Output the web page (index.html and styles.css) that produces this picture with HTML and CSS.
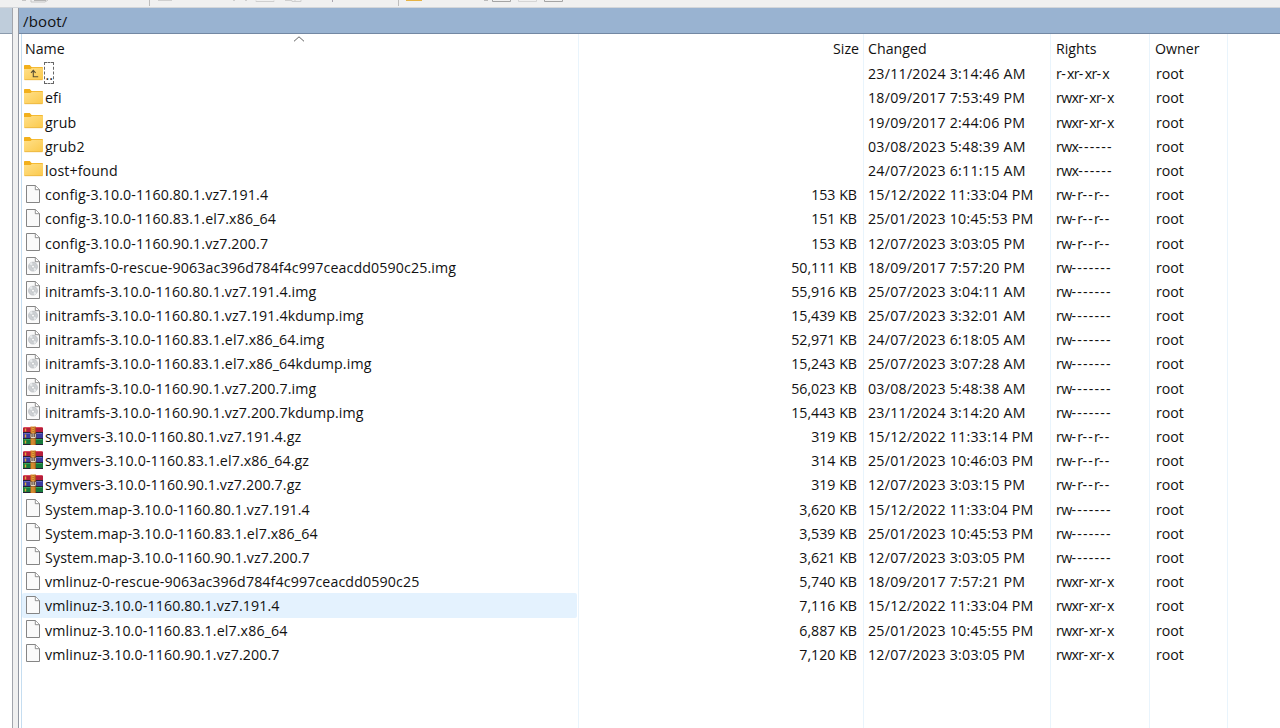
FILE: index.html
```html
<!DOCTYPE html>
<html lang="en">
  <head>
    <meta charset="UTF-8" />
    <meta name="viewport" content="width=device-width, initial-scale=1.0" />
    <title>/boot/</title>
    <link rel="stylesheet" href="styles.css">
  </head>
  <body>
    <!-- Icons shared by the file rows -->
    <svg class="sprite" aria-hidden="true">
      <defs>
        <linearGradient id="folder-fill" x1="0" y1="0" x2="1" y2="1">
          <stop offset="0" stop-color="#ffe08a" />
          <stop offset="1" stop-color="#fbc94b" />
        </linearGradient>
        <linearGradient id="strap-fill" x1="0" y1="0" x2="1" y2="0">
          <stop offset="0" stop-color="#c9701c" />
          <stop offset="0.5" stop-color="#f0a440" />
          <stop offset="1" stop-color="#a95712" />
        </linearGradient>
      </defs>
      <symbol id="folder" viewBox="0 0 20 20">
        <path d="M1 2.8q0-.8.8-.8h5l1.7 2H19q1 0 1 1v3H1z" fill="#f2b01c" />
        <path d="M1 6h6.5l1.6-1.3H19q1 0 1 1v10.3q0 1-1 1H2q-1 0-1-1z" fill="url(#folder-fill)" />
        <path d="M1.5 16.7h18" stroke="#e9b23c" stroke-width=".8" />
      </symbol>
      <symbol id="up" viewBox="0 0 20 20">
        <use href="#folder" />
        <path d="M10.3 7.5v6.3h4.9M8 9.8l2.3-2.4 2.3 2.4" fill="none" stroke="#5a5034" stroke-width="1.1" />
      </symbol>
      <symbol id="file" viewBox="0 0 20 20">
        <path d="M3.5 1.5h9l4 4v13h-13z" fill="#fafafa" stroke="#858585" />
        <path d="M12.3 1.5v4.2h4.2" fill="#fff" stroke="#858585" stroke-width=".9" />
      </symbol>
      <symbol id="disc" viewBox="0 0 20 20">
        <use href="#file" />
        <circle cx="10" cy="10.6" r="4.5" fill="#cdd0d3" stroke="#b0b4b8" stroke-width=".6" />
        <path d="M10 10.6L6.3 7.9A4.6 4.6 0 0 1 9 6.1zM10 10.6l3.7 2.7a4.6 4.6 0 0 1-2.5 1.7z" fill="#e6e9eb" />
        <circle cx="10" cy="10.6" r="1.5" fill="#fafafa" stroke="#a3a8ad" stroke-width=".5" />
      </symbol>
      <symbol id="archive" viewBox="0 0 20 20">
        <path d="M1 1h18l1 1v4.5H0V2z" fill="#b51f3c" />
        <path d="M0 6.5h20v6H0z" fill="#3b3c9e" />
        <path d="M0 12.5h20V19H0z" fill="#177a3b" />
        <path d="M0 6.5h20M0 12.5h20M0 18.5h20" stroke="#262136" stroke-width="1" />
        <path d="M1 1.5h18" stroke="#dc4a5c" />
        <path d="M1 7.5h18" stroke="#6869c5" />
        <path d="M1 13.5h18" stroke="#35a65a" />
        <path d="M2.5 2.5v3M2.5 8.5v3M2.5 14.5v3" stroke="#e5a936" stroke-width="1.4" />
        <path d="M7.5.5h5.3V19H7.5z" fill="url(#strap-fill)" />
        <path d="M10.1 1v5M10.1 13.5v5" stroke="#805018" stroke-width=".8" stroke-dasharray="1 1" />
        <path d="M7 7.5h6.4v5H7z" fill="#564035" />
        <path d="M8 8v3.5h4.3V8M10.1 7.5v4" fill="none" stroke="#f3e6d5" stroke-width=".9" />
      </symbol>
    </svg>

    <div class="toolbar">
      <svg width="1280" height="8" viewBox="0 0 1280 8">
        <path d="M22 .5h4M31 0v2h14l3-2" fill="none" stroke="#c5c5c5" />
        <path d="M34 .5h12" stroke="#b5b5b5" />
        <path d="M149.5 0v6M398.5 0v6" stroke="#bdbdbd" />
        <path d="M158 .5h14M233 .5h2M245 .5h2M256 .5v1h18v-1M285 .5h7v1h9V0M295 0v2" fill="none" stroke="#cfcfcf" />
        <path d="M332.5 0v2" stroke="#aaa6b0" />
        <path d="M406 .5h16" stroke="#e6b345" />
        <path d="M484 .5h4" stroke="#bbb" />
        <path d="M492.5 0v1.5h18V0M544.5 0v1.5h18V0" fill="none" stroke="#a5a5a5" />
        <path d="M518.5 0v1.5h18V0" fill="none" stroke="#d5d5d5" />
      </svg>
    </div>
    <div class="panels">
      <div class="left-panel"></div>
      <div class="splitter"></div>
      <div class="remote-panel">
        <div class="path">/boot/</div>
        <div class="list">
          <div class="columns">
            <span></span><span></span><span></span><span></span><span></span>
          </div>
          <div class="header row">
            <div class="name">Name</div>
            <div class="size">Size</div>
            <div class="changed">Changed</div>
            <div class="rights">Rights</div>
            <div class="owner">Owner</div>
            <svg class="sort" width="12" height="6" viewBox="0 0 12 6">
              <path d="M1 5.3l5-4.5 5 4.5" fill="none" stroke="#666" />
            </svg>
          </div>
          <div id="files"></div>
        </div>
      </div>
    </div>

    <script>
      // icon, name, size, changed, rights
      const files = [
        ["up", "..", "", "23/11/2024 3:14:46 AM", "r-xr-xr-x"],
        ["folder", "efi", "", "18/09/2017 7:53:49 PM", "rwxr-xr-x"],
        ["folder", "grub", "", "19/09/2017 2:44:06 PM", "rwxr-xr-x"],
        ["folder", "grub2", "", "03/08/2023 5:48:39 AM", "rwx------"],
        ["folder", "lost+found", "", "24/07/2023 6:11:15 AM", "rwx------"],
        ["file", "config-3.10.0-1160.80.1.vz7.191.4", "153 KB", "15/12/2022 11:33:04 PM", "rw-r--r--"],
        ["file", "config-3.10.0-1160.83.1.el7.x86_64", "151 KB", "25/01/2023 10:45:53 PM", "rw-r--r--"],
        ["file", "config-3.10.0-1160.90.1.vz7.200.7", "153 KB", "12/07/2023 3:03:05 PM", "rw-r--r--"],
        ["disc", "initramfs-0-rescue-9063ac396d784f4c997ceacdd0590c25.img", "50,111 KB", "18/09/2017 7:57:20 PM", "rw-------"],
        ["disc", "initramfs-3.10.0-1160.80.1.vz7.191.4.img", "55,916 KB", "25/07/2023 3:04:11 AM", "rw-------"],
        ["disc", "initramfs-3.10.0-1160.80.1.vz7.191.4kdump.img", "15,439 KB", "25/07/2023 3:32:01 AM", "rw-------"],
        ["disc", "initramfs-3.10.0-1160.83.1.el7.x86_64.img", "52,971 KB", "24/07/2023 6:18:05 AM", "rw-------"],
        ["disc", "initramfs-3.10.0-1160.83.1.el7.x86_64kdump.img", "15,243 KB", "25/07/2023 3:07:28 AM", "rw-------"],
        ["disc", "initramfs-3.10.0-1160.90.1.vz7.200.7.img", "56,023 KB", "03/08/2023 5:48:38 AM", "rw-------"],
        ["disc", "initramfs-3.10.0-1160.90.1.vz7.200.7kdump.img", "15,443 KB", "23/11/2024 3:14:20 AM", "rw-------"],
        ["archive", "symvers-3.10.0-1160.80.1.vz7.191.4.gz", "319 KB", "15/12/2022 11:33:14 PM", "rw-r--r--"],
        ["archive", "symvers-3.10.0-1160.83.1.el7.x86_64.gz", "314 KB", "25/01/2023 10:46:03 PM", "rw-r--r--"],
        ["archive", "symvers-3.10.0-1160.90.1.vz7.200.7.gz", "319 KB", "12/07/2023 3:03:15 PM", "rw-r--r--"],
        ["file", "System.map-3.10.0-1160.80.1.vz7.191.4", "3,620 KB", "15/12/2022 11:33:04 PM", "rw-------"],
        ["file", "System.map-3.10.0-1160.83.1.el7.x86_64", "3,539 KB", "25/01/2023 10:45:53 PM", "rw-------"],
        ["file", "System.map-3.10.0-1160.90.1.vz7.200.7", "3,621 KB", "12/07/2023 3:03:05 PM", "rw-------"],
        ["file", "vmlinuz-0-rescue-9063ac396d784f4c997ceacdd0590c25", "5,740 KB", "18/09/2017 7:57:21 PM", "rwxr-xr-x"],
        ["file", "vmlinuz-3.10.0-1160.80.1.vz7.191.4", "7,116 KB", "15/12/2022 11:33:04 PM", "rwxr-xr-x"],
        ["file", "vmlinuz-3.10.0-1160.83.1.el7.x86_64", "6,887 KB", "25/01/2023 10:45:55 PM", "rwxr-xr-x"],
        ["file", "vmlinuz-3.10.0-1160.90.1.vz7.200.7", "7,120 KB", "12/07/2023 3:03:05 PM", "rwxr-xr-x"],
      ];
      const hovered = 22;

      // dashes are set wider than the letters
      const spaceDashes = (text) => text.replace(/-+/g, '<span class="dash">$&</span>');

      document.getElementById("files").innerHTML = files.map(([icon, name, size, changed, rights], i) => `
        <div class="row${i === hovered ? " hover" : ""}">
          <div class="name">
            <svg class="icon" width="20" height="20"><use href="#${icon}" /></svg>
            <span class="${i === 0 ? "focused" : "label"}">${name}</span>
          </div>
          <div class="size">${size}</div>
          <div class="changed">${changed}</div>
          <div class="rights mode">${spaceDashes(rights)}</div>
          <div class="owner">root</div>
        </div>`).join("");
    </script>
  </body>
</html>
```
FILE: styles.css
```css
body {
  margin: 0;
  height: 728px;
  overflow: hidden;
  display: flex;
  flex-direction: column;
  font-family: "Open Sans", "Noto Sans", sans-serif;
  font-size: 14.2px;
  color: #111;
  background-color: #f0f0f0;
}

.sprite {
  position: absolute;
  width: 0;
  height: 0;
}

.toolbar {
  height: 7px;
  flex: none;
  overflow: hidden;
  border-bottom: 1px solid #d3d6da;
}

.toolbar svg {
  display: block;
}

.panels {
  flex: 1;
  display: flex;
  min-height: 0;
}

.left-panel {
  width: 12px;
  background: linear-gradient(#bfcddb 25px, #8b9bad 25px, #8b9bad 26px, #fff 26px);
  border-right: 1px solid #a2a5ac;
}

.splitter {
  width: 5px;
  background-color: #f0f0f0;
}

.remote-panel {
  flex: 1;
  display: flex;
  flex-direction: column;
  border-left: 1px solid #9297a2;
}

.path {
  height: 25px;
  padding-left: 4px;
  font-size: 15px;
  letter-spacing: 0.15px;
  line-height: 26px;
  background-color: #99b3d1;
  border-bottom: 1px solid #7388a3;
}

.list {
  flex: 1;
  position: relative;
  background-color: #fff;
  border-left: 2px solid #fff;
  box-shadow: inset 1px 0 #c5ddf0;
}

.row,
.columns {
  display: grid;
  grid-template-columns: 558px 285px 187px 99px 78px;
}

/* column dividers behind the rows */
.columns {
  position: absolute;
  inset: 0 auto 0 0;
}

.columns span {
  border-right: 1px solid #e9f4fc;
  background: linear-gradient(#e6e6e6, #e6e6e6) right top / 1px 27px no-repeat;
  background-origin: border-box;
}

.row {
  position: relative;
  height: 24.2px;
  line-height: 25px;
  white-space: nowrap;
}

.header {
  height: 27.2px;
  line-height: 29px;
}

.name {
  display: flex;
  align-items: center;
  padding-left: 2px;
}

.header .name {
  padding-left: 4px;
}

.hover .name {
  margin: 0 2px 0 1px;
  padding-left: 1px;
  background-color: #e4f2fe;
  border-radius: 2px;
}

.icon {
  flex: none;
  margin: 0 2px 2px 0;
}

.label {
  letter-spacing: 0.13px;
}

.size {
  text-align: right;
  padding-right: 7px;
}

.header .size {
  padding-right: 5px;
}

.changed {
  padding-left: 4px;
  letter-spacing: 0.25px;
}

.header .changed {
  letter-spacing: 0;
}

.rights {
  padding-left: 5px;
}

.owner {
  padding-left: 6px;
}

.header .owner {
  padding-left: 5px;
}

.mode {
  letter-spacing: -0.65px;
}

.dash {
  letter-spacing: 1.2px;
}

.focused {
  box-sizing: border-box;
  width: 10px;
  height: 22px;
  margin: 0 0 2px -1px;
  padding-left: 1px;
  line-height: 24px;
  border: 1px dashed #666;
  text-indent: -0.5px;
}

.sort {
  position: absolute;
  left: 272px;
  top: 2px;
}
```
